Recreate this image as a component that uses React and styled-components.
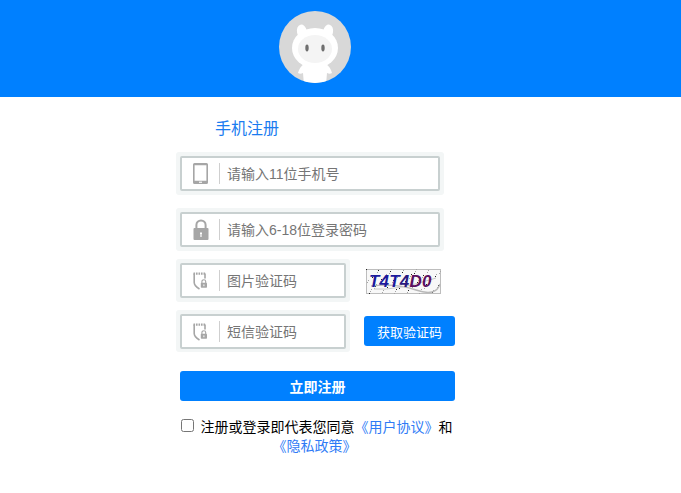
import React from "react";
import styled, { createGlobalStyle } from "styled-components";

const Global = createGlobalStyle`
  html, body { margin: 0; padding: 0; background: #fff; }
  body { font-family: "Liberation Sans", "Noto Sans CJK SC", sans-serif; font-size: 14px; }
  input::placeholder { color: #757575; opacity: 1; }
`;

const Page = styled.div`
  width: 681px;
  height: 493px;
  overflow: hidden;
`;
const Header = styled.header`
  height: 97px;
  background: #0080ff;
  padding: 11px 0 0 279px;
  box-sizing: border-box;
`;
const Avatar = styled.svg`
  display: block;
  width: 72px;
  height: 72px;
`;
const Form = styled.form`
  width: 279px;
  margin-left: 176px;
  display: flex;
  flex-direction: column;
`;
const Title = styled.h2`
  margin: 22px 0 13px 39px;
  font-size: 16px;
  font-weight: 400;
  line-height: 20px;
  color: #1a7cf0;
`;
const Row = styled.div`
  display: flex;
  align-items: flex-start;
  margin-bottom: ${(p) => p.$gap}px;
`;
const Halo = styled.div`
  width: ${(p) => p.$w}px;
  height: ${(p) => p.$h || 43}px;
  box-sizing: border-box;
  padding: 4px;
  background: #f3f6f6;
  border-radius: 3px;
  flex: none;
`;
const Field = styled.label`
  height: 35px;
  box-sizing: border-box;
  display: flex;
  align-items: center;
  background: #fff;
  border: 2px solid #c8d0d0;
  border-radius: 2px;
`;
const IconSlot = styled.span`
  width: 38px;
  height: 21px;
  flex: none;
  box-sizing: border-box;
  display: flex;
  align-items: center;
  justify-content: center;
  border-right: 1px solid #cfcfcf;
`;
const Input = styled.input`
  flex: 1;
  min-width: 0;
  border: 0;
  outline: 0;
  background: transparent;
  padding: 0 0 0 7px;
  font: 14px "Liberation Sans", "Noto Sans CJK SC", sans-serif;
  color: #333;
`;
const Captcha = styled.svg`
  display: block;
  width: 75px;
  height: 25px;
  margin: 10px 0 0 16px;
  flex: none;
`;
const SmsButton = styled.button`
  width: 91px;
  height: 30px;
  margin: 6px 0 0 14px;
  padding: 0;
  flex: none;
  border: 0;
  border-radius: 3px;
  background: #0080ff;
  color: #fff;
  font: 13px "Liberation Sans", "Noto Sans CJK SC", sans-serif;
`;
const Submit = styled.button`
  width: 275px;
  height: 30px;
  margin: 0 0 0 4px;
  padding: 0;
  border: 0;
  border-radius: 3px;
  background: #0080ff;
  color: #fff;
  font: 700 14px "Liberation Sans", "Noto Sans CJK SC", sans-serif;
`;
const Agreement = styled.p`
  margin: 17px 0 0 0;
  width: 277px;
  text-align: center;
  font-size: 14px;
  line-height: 19px;
  color: #000;
`;
const Check = styled.input`
  width: 13px;
  height: 13px;
  margin: 0 3px 0 4px;
  vertical-align: 0;
`;
const Link = styled.a`
  color: #2f7bf6;
  text-decoration: none;
`;

const PhoneIcon = () => (
  <svg width="15" height="21" viewBox="0 0 15 21">
    <path fill="#a6a6a6" fillRule="evenodd" d="M1.5 0h12A1.5 1.5 0 0 1 15 1.5v18a1.5 1.5 0 0 1-1.5 1.5h-12A1.5 1.5 0 0 1 0 19.5v-18A1.5 1.5 0 0 1 1.5 0zM1.6 2.2v15.6h11.8V2.2z" />
    <rect x="6" y="18.7" width="3" height="1.1" fill="#fff" />
  </svg>
);
const LockIcon = () => (
  <svg width="16" height="21" viewBox="0 0 16 21">
    <path fill="none" stroke="#a6a6a6" strokeWidth="2" d="M3.4 9.5V6a4.6 4.6 0 0 1 9.2 0v3.5" />
    <rect x="0.5" y="9" width="15" height="12" rx="1" fill="#a6a6a6" />
    <path fill="#fff" d="M7 13.5h2v1.4h-.4V18H7.4v-3.1H7z" />
  </svg>
);
const ShieldIcon = () => (
  <svg width="15" height="18" viewBox="0 0 15 18">
    <path fill="none" stroke="#a6a6a6" strokeWidth="2.2" strokeDasharray="1.6 0.9" d="M0.5 1.6h12" />
    <path fill="none" stroke="#a6a6a6" strokeWidth="1.6" d="M1.2 1.5v9c0 2.6 2.2 4.6 5.3 6.5M12 1.5v5" />
    <path fill="none" stroke="#a6a6a6" strokeWidth="1.1" d="M8.9 11V9.6a1.9 1.9 0 0 1 3.8 0V11" />
    <rect x="7.8" y="10.8" width="6.2" height="5" rx=".7" fill="#a6a6a6" />
    <rect x="10.4" y="12.4" width="1" height="1.8" fill="#fff" />
  </svg>
);

const noise = Array.from({ length: 110 }, (_, i) => [
  (i * 37) % 75,
  (i * 23 + (i % 5) * 3) % 25,
  i % 3,
]);

const CaptchaImage = () => (
  <Captcha viewBox="0 0 75 25">
    <rect x="0.5" y="0.5" width="74" height="24" fill="#f8f8f8" stroke="#bdbdbd" />
    {noise.map(([x, y, k], i) => (
      <rect key={i} x={x} y={y} width="1" height="1" fill={k ? "#a5a5a5" : "#222"} />
    ))}
    <path d="M5 17 Q30 14 50 21 T74 15" fill="none" stroke="#b8b8b8" strokeWidth="1.4" />
    <path d="M8 20 Q30 22 70 9" fill="none" stroke="#c9c9c9" strokeWidth="1" />
    <text x="3" y="18" fontFamily="Liberation Sans" fontSize="17" fontWeight="700" fontStyle="italic" letterSpacing="0.2">
      <tspan fill="#1c1a9c">T4T</tspan>
      <tspan fill="#2a1a80">4</tspan>
      <tspan fill="#5a1060">D0</tspan>
    </text>
  </Captcha>
);

const AvatarArt = () => (
  <Avatar viewBox="0 0 72 72">
    <circle cx="36" cy="36" r="36" fill="#d8d8d8" />
    <defs>
      <clipPath id="av"><circle cx="36" cy="36" r="36" /></clipPath>
    </defs>
    <g clipPath="url(#av)" fill="#fff">
      <ellipse cx="23" cy="21" rx="5" ry="7.5" transform="rotate(-12 23 21)" />
      <ellipse cx="49" cy="21" rx="5" ry="7.5" transform="rotate(12 49 21)" />
      <path d="M25 53c-3 2-5 5-6 9 1.500 1 3 1 5 0l1 12h22l1-12c2 1 3.500 1 5 0-1-4-3-7-6-9z" />
      <ellipse cx="36" cy="37" rx="23" ry="20" />
      <ellipse cx="36" cy="38" rx="17" ry="14" fill="#f4f4f4" />
      <ellipse cx="28" cy="37" rx="1.700" ry="3.400" fill="#6f6f6f" />
      <ellipse cx="44" cy="37" rx="1.700" ry="3.400" fill="#6f6f6f" />
    </g>
  </Avatar>
);

export default function App() {
  return (
    <Page>
      <Global />
      <Header>
        <AvatarArt />
      </Header>
      <Form onSubmit={(e) => e.preventDefault()}>
        <Title>手机注册</Title>
        <Row $gap={13}>
          <Halo $w={268}>
            <Field>
              <IconSlot><PhoneIcon /></IconSlot>
              <Input placeholder="请输入11位手机号" />
            </Field>
          </Halo>
        </Row>
        <Row $gap={8}>
          <Halo $w={268}>
            <Field>
              <IconSlot><LockIcon /></IconSlot>
              <Input placeholder="请输入6-18位登录密码" />
            </Field>
          </Halo>
        </Row>
        <Row $gap={8}>
          <Halo $w={174}>
            <Field>
              <IconSlot><ShieldIcon /></IconSlot>
              <Input placeholder="图片验证码" />
            </Field>
          </Halo>
          <CaptchaImage />
        </Row>
        <Row $gap={19}>
          <Halo $w={174} $h={42}>
            <Field>
              <IconSlot><ShieldIcon /></IconSlot>
              <Input placeholder="短信验证码" />
            </Field>
          </Halo>
          <SmsButton type="button">获取验证码</SmsButton>
        </Row>
        <Submit>立即注册</Submit>
        <Agreement>
          <Check type="checkbox" /> 注册或登录即代表您同意<Link>《用户协议》</Link>和 <Link>《隐私政策》</Link>
        </Agreement>
      </Form>
    </Page>
  );
}
